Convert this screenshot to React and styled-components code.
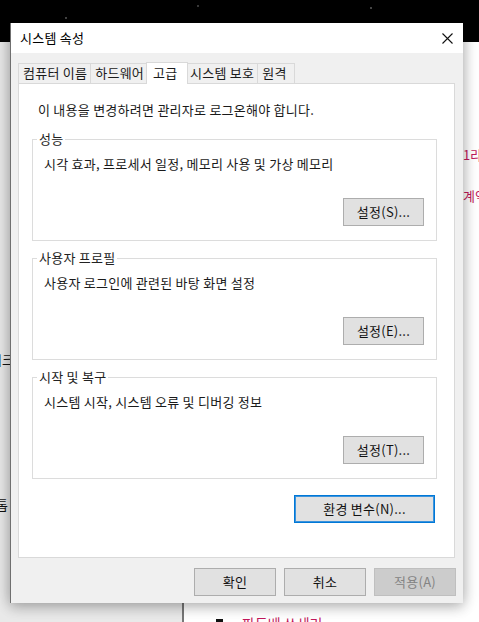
import React from "react";
import styled, { createGlobalStyle } from "styled-components";

//global
const GlobalStyle = createGlobalStyle`
  html, body {
    margin: 0;
    padding: 0;
    background: #000;
  }
  body {
    font-family: "Noto Sans CJK KR", "Noto Sans", sans-serif;
    -webkit-font-smoothing: antialiased;
  }
  #root {
    width: 479px;
    height: 622px;
  }
`;

const groups = [
  { title: "성능", text: "시각 효과, 프로세서 일정, 메모리 사용 및 가상 메모리", button: "설정(S)..." },
  { title: "사용자 프로필", text: "사용자 로그인에 관련된 바탕 화면 설정", button: "설정(E)..." },
  { title: "시작 및 복구", text: "시스템 시작, 시스템 오류 및 디버깅 정보", button: "설정(T)..." },
];

const tabs = ["컴퓨터 이름", "하드웨어", "고급", "시스템 보호", "원격"];

const App = () => {
  return (
    <>
      <GlobalStyle />
      <Desktop>
        <TopBand />
        <BackWindow>
          <Sidebar>
            <SideItem $indent={-34} $gap={308}>네트워크</SideItem>
            <SideItem $indent={-40} $gap={125}>데스크톱</SideItem>
          </Sidebar>
          <Content>
            <ContentLine $indent={279} $gap={104}>1라이선스 조건</ContentLine>
            <ContentLine $indent={279} $gap={23}>계약 내용</ContentLine>
            <BottomLine>
              <svg width="10" height="11" viewBox="0 0 10 11">
                <path d="M3 0 H10 V11 H0 V3 Z" fill="#111" />
                <path d="M0 0 H3 V3 H0 Z" fill="#fff" />
              </svg>
              <span>파도베 쓰세리</span>
            </BottomLine>
          </Content>
        </BackWindow>

        <Dialog>
          <TitleBar>
            <span>시스템 속성</span>
            <CloseButton>
              <svg width="11" height="11" viewBox="0 0 11 11">
                <path d="M0.5 0.5 L10.5 10.5 M10.5 0.5 L0.5 10.5" stroke="#111" strokeWidth="1.1" />
              </svg>
            </CloseButton>
          </TitleBar>

          <DialogBody>
            <TabStrip>
              {tabs.map((t) => (
                <Tab key={t} $active={t === "고급"}>
                  {t}
                </Tab>
              ))}
            </TabStrip>

            <Panel>
              <Note>이 내용을 변경하려면 관리자로 로그온해야 합니다.</Note>
              {groups.map((g, i) => (
                <Group key={g.title} $first={i === 0}>
                  <legend>{g.title}</legend>
                  <GroupBody>
                    <GroupText>{g.text}</GroupText>
                    <Button>{g.button}</Button>
                  </GroupBody>
                </Group>
              ))}
              <EnvButton>환경 변수(N)...</EnvButton>
            </Panel>

            <Footer>
              <Button $wide>확인</Button>
              <Button $wide>취소</Button>
              <Button $wide disabled>
                적용(A)
              </Button>
            </Footer>
          </DialogBody>
        </Dialog>
      </Desktop>
    </>
  );
};

const Desktop = styled.div`
  position: relative;
  width: 479px;
  height: 622px;
  overflow: hidden;
  display: flex;
  flex-direction: column;
  background: #000;
`;

const TopBand = styled.div`
  height: 42px;
  flex-shrink: 0;
  background:
    radial-gradient(circle at 66px 18px, #555 0.6px, transparent 1.2px),
    radial-gradient(circle at 198px 6px, #444 0.6px, transparent 1.2px),
    radial-gradient(circle at 371px 8px, #555 0.6px, transparent 1.2px),
    radial-gradient(circle at 440px 30px, #444 0.6px, transparent 1.2px),
    #000;
`;

const BackWindow = styled.div`
  flex: 1;
  display: flex;
  overflow: hidden;
`;

const Sidebar = styled.div`
  width: 182px;
  flex-shrink: 0;
  background: #e9e9e9;
  border-right: 2px solid #777;
  display: flex;
  flex-direction: column;
  overflow: hidden;
`;

const SideItem = styled.div`
  flex-shrink: 0;
  margin-top: ${({ $gap }) => $gap}px;
  margin-left: ${({ $indent }) => $indent}px;
  font-size: 13px;
  line-height: 20px;
  color: #111;
  white-space: nowrap;
`;

const Content = styled.div`
  flex: 1;
  background: #fff;
  display: flex;
  flex-direction: column;
  overflow: hidden;
`;

const ContentLine = styled.div`
  flex-shrink: 0;
  margin-top: ${({ $gap }) => $gap}px;
  margin-left: ${({ $indent }) => $indent}px;
  font-size: 13px;
  line-height: 18px;
  color: #c2185b;
  white-space: nowrap;
`;

const BottomLine = styled.div`
  flex-shrink: 0;
  margin-top: 408px;
  margin-left: 29px;
  display: flex;
  align-items: center;
  gap: 19px;
  height: 20px;
  font-size: 14px;
  color: #c2185b;
  white-space: nowrap;
  svg {
    margin-top: 2px;
  }
`;

const Dialog = styled.div`
  position: absolute;
  left: 10px;
  top: 23px;
  width: 453px;
  height: 580px;
  box-sizing: border-box;
  border-left: 1px solid #6f6f6f;
  background: #f0f0f0;
  box-shadow: 0 0 14px rgba(0, 0, 0, 0.3), 0 6px 12px rgba(0, 0, 0, 0.12);
  display: flex;
  flex-direction: column;
  color: #1a1a1a;
  letter-spacing: 0.25px;
`;

const TitleBar = styled.div`
  height: 30px;
  flex-shrink: 0;
  background: #fff;
  display: flex;
  align-items: center;
  justify-content: space-between;
  padding-left: 9px;
  font-size: 13px;
  line-height: 16px;
  color: #000;
`;

const CloseButton = styled.div`
  width: 32px;
  height: 30px;
  display: flex;
  align-items: center;
  justify-content: center;
`;

const DialogBody = styled.div`
  flex: 1;
  display: flex;
  flex-direction: column;
  padding: 9px 8px 7px 7px;
`;

const TabStrip = styled.div`
  height: 21px;
  display: flex;
  align-items: flex-end;
  position: relative;
  z-index: 1;
`;

const Tab = styled.div`
  box-sizing: border-box;
  height: ${({ $active }) => ($active ? 22 : 20)}px;
  min-width: ${({ $active }) => ($active ? 42 : 38)}px;
  margin: ${({ $active }) => ($active ? "0 -2px -1px -2px" : "0 0 0 -1px")};
  padding: 0 3px 0 ${({ $active }) => ($active ? 6 : 4)}px;
  border: 1px solid #d9d9d9;
  border-bottom: none;
  background: ${({ $active }) => ($active ? "#fff" : "#f0f0f0")};
  position: relative;
  z-index: ${({ $active }) => ($active ? 2 : 1)};
  font-size: 13px;
  line-height: ${({ $active }) => ($active ? 20 : 18)}px;
  white-space: nowrap;
  &:first-child {
    margin-left: 0;
  }
`;

const Panel = styled.div`
  height: 475px;
  box-sizing: border-box;
  border: 1px solid #d9d9d9;
  background: #fff;
  padding: 18px 17px 0 13px;
  display: flex;
  flex-direction: column;
`;

const Note = styled.div`
  font-size: 13px;
  line-height: 16px;
  padding-left: 6px;
  white-space: nowrap;
`;

const Group = styled.fieldset`
  margin: ${({ $first }) => ($first ? 13 : 9)}px 0 0 0;
  padding: 0 12px 14px 0;
  border: 1px solid #dcdcdc;
  min-inline-size: 0;
  legend {
    margin-left: 4px;
    padding: 0 2px;
    font-size: 13px;
    line-height: 16px;
    color: #222;
  }
`;

const GroupBody = styled.div`
  display: flex;
  flex-direction: column;
  padding-top: 9px;
  button {
    align-self: flex-end;
    margin-top: 26px;
  }
`;

const GroupText = styled.div`
  font-size: 13px;
  line-height: 16px;
  padding-left: 11px;
  white-space: nowrap;
`;

const Button = styled.button`
  box-sizing: border-box;
  width: ${({ $wide }) => ($wide ? 82 : 81)}px;
  height: 28px;
  padding: 0;
  border: 1px solid #adadad;
  background: #e1e1e1;
  font-family: inherit;
  font-size: 13px;
  line-height: 16px;
  letter-spacing: 0.25px;
  color: #111;
  &:disabled {
    background: #cccccc;
    border-color: #bfbfbf;
    color: #838383;
  }
`;

const EnvButton = styled(Button)`
  width: 141px;
  align-self: flex-end;
  margin: 16px 2px 0 0;
  border-color: #0078d7;
  box-shadow: inset 0 0 0 1px #3c93dc;
`;

const Footer = styled.div`
  display: flex;
  justify-content: flex-end;
  gap: 8px;
  margin: 10px -1px 0 0;
`;

export default App;
